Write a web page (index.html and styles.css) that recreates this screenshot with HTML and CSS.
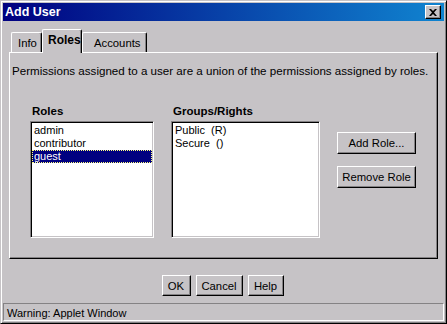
FILE: index.html
```html
<!DOCTYPE html>
<html lang="en">
<head>
  <meta charset="UTF-8" />
  <title>Add User</title>
  <link rel="stylesheet" href="styles.css">
</head>
<body>
  <div class="window">
    <div class="titlebar">
      <span class="title">Add User</span>
      <button class="close">
        <svg width="8" height="7" viewBox="0 0 8 7"><path d="M0 0h2l2 2 2-2h2L5 3.5 8 7H6L4 5 2 7H0l3-3.5z" fill="#000"/></svg>
      </button>
    </div>

    <div class="tabs">
      <div class="tab">Info</div>
      <div class="tab active">Roles</div>
      <div class="tab">Accounts</div>
    </div>

    <div class="panel">
      <p class="intro">Permissions assigned to a user are a union of the permissions assigned by roles.</p>

      <div class="columns">
        <div class="column">
          <div class="label">Roles</div>
          <ul class="listbox roles">
            <li>admin</li>
            <li>contributor</li>
            <li class="selected">guest</li>
          </ul>
        </div>
        <div class="column">
          <div class="label">Groups/Rights</div>
          <ul class="listbox groups">
            <li>Public&nbsp; (R)</li>
            <li>Secure&nbsp; ()</li>
          </ul>
        </div>
        <div class="side-buttons">
          <button class="btn wide">Add Role...</button>
          <button class="btn wide">Remove Role</button>
        </div>
      </div>
    </div>

    <div class="footer">
      <button class="btn ok">OK</button>
      <button class="btn cancel">Cancel</button>
      <button class="btn help">Help</button>
    </div>

    <div class="status">Warning: Applet Window</div>
  </div>
</body>
</html>
```

FILE: styles.css
```css
body {
  margin: 0;
  font-family: "Liberation Sans", Arial, sans-serif;
  font-size: 11px;
  color: #000;
}

.window {
  width: 447px;
  height: 324px;
  box-sizing: border-box;
  background: #c6c3c6;
  border: 1px solid;
  border-color: #c6c3c6 #000 #000 #c6c3c6;
  box-shadow: inset 1px 1px #fff, inset -1px -1px #848284;
  padding: 2px 2px;
  display: flex;
  flex-direction: column;
}

.titlebar {
  height: 18px;
  background: linear-gradient(to right, #000080, #1084d0);
  display: flex;
  align-items: center;
  justify-content: space-between;
  padding: 0 2px 0 2px;
}

.title {
  color: #fff;
  font-weight: bold;
  font-size: 12.5px;
}

.close {
  width: 16px;
  height: 14px;
  padding: 0;
  margin-right: 1px;
  background: #c6c3c6;
  border: 1px solid;
  border-color: #fff #000 #000 #fff;
  box-shadow: inset -1px -1px #848284;
  display: flex;
  align-items: center;
  justify-content: center;
}

.tabs {
  display: flex;
  align-items: flex-end;
  margin: 8px 0 0 8px;
  height: 23px;
  position: relative;
  z-index: 1;
}

.tab {
  height: 20px;
  box-sizing: border-box;
  padding: 4px 6px 0;
  border: 1px solid #fff;
  border-bottom: none;
  border-right-color: #000;
  border-radius: 2px 2px 0 0;
  box-shadow: inset -1px 0 #848284;
  font-size: 11.3px;
}

.tab:first-child {
  width: 31px;
}

.tab.active {
  height: 24px;
  margin-bottom: -1px;
  background: #c6c3c6;
  font-weight: bold;
  font-size: 12px;
  padding: 3px 5px 0;
  width: 40px;
}

.tab:last-child {
  width: 65px;
  padding-left: 11px;
}

.panel {
  margin: 0 6px;
  height: 207px;
  box-sizing: border-box;
  border: 1px solid;
  border-color: #fff #000 #000 #fff;
  box-shadow: inset -1px -1px #848284;
  padding: 11px 2px 0 2px;
}

.intro {
  margin: 0;
  line-height: 13px;
  font-size: 11.6px;
}

.columns {
  display: flex;
  margin: 27px 0 0 18px;
}

.column {
  margin-right: 17px;
}

.label {
  font-weight: bold;
  font-size: 11.5px;
  line-height: 14px;
  padding-left: 2px;
  margin-bottom: 3px;
}

.listbox {
  list-style: none;
  margin: 0;
  padding: 2px 1px;
  background: #fff;
  height: 117px;
  box-sizing: border-box;
  border: 1px solid;
  border-color: #848284 #fff #fff #848284;
  box-shadow: inset 1px 1px #000, inset -1px -1px #c6c3c6;
}

.listbox li {
  height: 13px;
  line-height: 13px;
  padding-left: 2px;
  font-size: 11px;
}

.roles {
  width: 124px;
}

.groups {
  width: 149px;
}

.listbox li.selected {
  background: #000080;
  color: #fff;
  outline: 1px dotted #ffff80;
  outline-offset: -1px;
}

.side-buttons {
  display: flex;
  flex-direction: column;
  gap: 12px;
  padding-top: 28px;
}

.btn {
  font-family: "Liberation Sans", Arial, sans-serif;
  font-size: 11.3px;
  background: #c6c3c6;
  border: 1px solid;
  border-color: #fff #000 #000 #fff;
  box-shadow: inset -1px -1px #848284;
  padding: 0;
  height: 22px;
  color: #000;
}

.btn.wide {
  width: 79px;
}

.footer {
  display: flex;
  justify-content: center;
  gap: 5px;
  margin: 16px 2px 0 0;
}

.footer .btn {
  height: 21px;
}

.ok {
  width: 29px;
}

.cancel {
  width: 47px;
}

.help {
  width: 36px;
}

.status {
  margin-top: 7px;
  height: 18px;
  box-sizing: border-box;
  border: 1px solid;
  border-color: #848284 #fff #fff #848284;
  padding: 2px 0 0 3px;
  font-size: 11px;
  line-height: 14px;
}
```
